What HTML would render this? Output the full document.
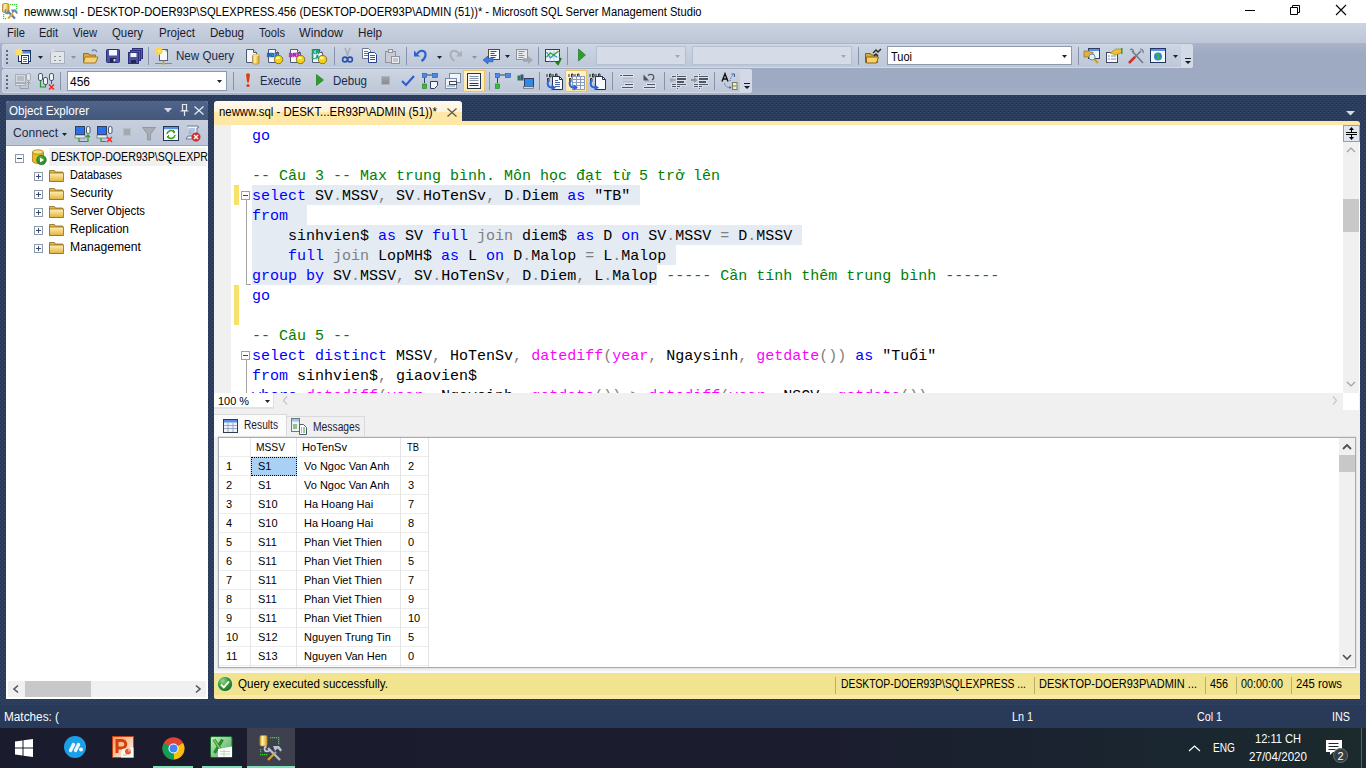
<!DOCTYPE html>
<html><head><meta charset="utf-8"><style>*{margin:0;padding:0;box-sizing:border-box}
html,body{width:1366px;height:768px;overflow:hidden;background:#2a3b59}
body{position:relative;font-family:"Liberation Sans",sans-serif}
.a{position:absolute}
.i{position:absolute;overflow:visible}
.t{position:absolute;white-space:pre;line-height:normal}
.code{position:absolute;font-family:"Liberation Mono",monospace;font-size:15px;white-space:pre;line-height:20px;color:#000}
.k{color:#0000ff}.c{color:#008000}.g{color:#808080}.m{color:#ff00ff}</style></head><body>
<svg class="i" style="left:0;top:0" width="1366" height="768"><defs><pattern id="dp" width="4" height="4" patternUnits="userSpaceOnUse"><rect width="4" height="4" fill="#2b3d5b"/><rect x="0" y="0" width="1" height="1" fill="#37496b"/><rect x="2" y="2" width="1" height="1" fill="#37496b"/><rect x="2" y="1" width="1" height="1" fill="#25344f"/><rect x="0" y="3" width="1" height="1" fill="#25344f"/></pattern></defs><rect width="1366" height="768" fill="url(#dp)"/></svg>
<div class="a" style="left:0px;top:0px;width:1366px;height:23px;background:#fff"></div>
<svg width="0" height="0" style="position:absolute"><defs><linearGradient id="gold" x1="0" y1="0" x2="1" y2="0"><stop offset="0" stop-color="#d9a830"/><stop offset="0.35" stop-color="#fff2b0"/><stop offset="1" stop-color="#e0a010"/></linearGradient></defs></svg>
<svg class="i" style="left:0px;top:0px;" width="24" height="24" viewBox="0 0 24 24"><rect x="2.5" y="3.5" width="6.5" height="9" rx="1.5" fill="url(#gold)" stroke="#b89040" stroke-width="0.9"/><rect x="10" y="4" width="1.2" height="1.2" fill="#33cc33"/><rect x="12" y="4" width="1.2" height="1.2" fill="#33cc33"/><rect x="14" y="4" width="1.2" height="1.2" fill="#33cc33"/><rect x="16" y="4" width="1.2" height="1.2" fill="#33cc33"/><rect x="16" y="6" width="1.2" height="1.2" fill="#33cc33"/><rect x="16" y="8" width="1.2" height="1.2" fill="#33cc33"/><rect x="3" y="14" width="1.2" height="1.2" fill="#33cc33"/><rect x="3" y="16" width="1.2" height="1.2" fill="#33cc33"/><rect x="3" y="18" width="1.2" height="1.2" fill="#33cc33"/><rect x="5" y="18" width="1.2" height="1.2" fill="#33cc33"/><path d="M7.5 11L15 18.5" stroke="#5a78a8" stroke-width="2.2"/><path d="M6.5 9.5a2 2 0 1 0 2.5 2.5" fill="none" stroke="#6a88b8" stroke-width="1.6"/><path d="M11 9.5h5l2 3.5-1.5 1-2-2.5-2 2z" fill="#6a88b8"/><path d="M8 18.5l5-5" stroke="#e8a820" stroke-width="2"/></svg>
<span class="t" style="left:24px;top:5.14px;font-size:12px;color:#000;font-family:'Liberation Sans';transform:scaleX(0.9307);transform-origin:0 0;">newww.sql - DESKTOP-DOER93P\SQLEXPRESS.456 (DESKTOP-DOER93P\ADMIN (51))* - Microsoft SQL Server Management Studio</span>
<div class="a" style="left:1245px;top:10px;width:10px;height:1px;background:#000"></div>
<svg class="i" style="left:1289px;top:4px;" width="12" height="12" viewBox="0 0 12 12"><path d="M1.5 3.5h7v7h-7zM3.5 3.5v-2h7v7h-2" fill="none" stroke="#000" stroke-width="1"/></svg>
<svg class="i" style="left:1335px;top:4px;" width="12" height="12" viewBox="0 0 12 12"><path d="M1 1L11 11M11 1L1 11" stroke="#000" stroke-width="1.1"/></svg>
<div class="a" style="left:0px;top:23px;width:1366px;height:20px;background:linear-gradient(#ccd4e2,#bcc6d7)"></div>
<span class="t" style="left:7px;top:26.14px;font-size:12px;color:#1b1b2e;font-family:'Liberation Sans';transform:scaleX(0.9309);transform-origin:0 0;">File</span>
<span class="t" style="left:39px;top:26.14px;font-size:12px;color:#1b1b2e;font-family:'Liberation Sans';transform:scaleX(0.9189);transform-origin:0 0;">Edit</span>
<span class="t" style="left:73px;top:26.14px;font-size:12px;color:#1b1b2e;font-family:'Liberation Sans';transform:scaleX(0.9305);transform-origin:0 0;">View</span>
<span class="t" style="left:112px;top:26.14px;font-size:12px;color:#1b1b2e;font-family:'Liberation Sans';transform:scaleX(0.9487);transform-origin:0 0;">Query</span>
<span class="t" style="left:159px;top:26.14px;font-size:12px;color:#1b1b2e;font-family:'Liberation Sans';transform:scaleX(0.9639);transform-origin:0 0;">Project</span>
<span class="t" style="left:210px;top:26.14px;font-size:12px;color:#1b1b2e;font-family:'Liberation Sans';transform:scaleX(0.9615);transform-origin:0 0;">Debug</span>
<span class="t" style="left:259px;top:26.14px;font-size:12px;color:#1b1b2e;font-family:'Liberation Sans';transform:scaleX(0.9281);transform-origin:0 0;">Tools</span>
<span class="t" style="left:299px;top:26.14px;font-size:12px;color:#1b1b2e;font-family:'Liberation Sans';transform:scaleX(1.0309);transform-origin:0 0;">Window</span>
<span class="t" style="left:358px;top:26.14px;font-size:12px;color:#1b1b2e;font-family:'Liberation Sans';transform:scaleX(0.9725);transform-origin:0 0;">Help</span>
<div class="a" style="left:0px;top:43px;width:1366px;height:52px;background:linear-gradient(#a9b4c9,#9eaac1 20%,#9eaac1 85%,#a7b2c7)"></div>
<div class="a" style="left:2px;top:44px;width:1191px;height:24px;background:linear-gradient(#cdd5e2,#bdc7d7);border-radius:3px;box-shadow:inset 0 0 0 1px #d3dae6"></div>
<div class="a" style="left:1181px;top:44px;width:12px;height:24px;background:#d3dae6;border-radius:0 3px 3px 0"></div>
<div class="a" style="left:2px;top:69px;width:750px;height:24px;background:linear-gradient(#cdd5e2,#bdc7d7);border-radius:3px;box-shadow:inset 0 0 0 1px #d3dae6"></div>
<div class="a" style="left:740px;top:69px;width:12px;height:24px;background:#d3dae6;border-radius:0 3px 3px 0"></div>
<div class="a" style="left:6px;top:50px;width:2px;height:2px;background:#5a6780"></div><div class="a" style="left:6px;top:54px;width:2px;height:2px;background:#5a6780"></div><div class="a" style="left:6px;top:58px;width:2px;height:2px;background:#5a6780"></div><div class="a" style="left:6px;top:62px;width:2px;height:2px;background:#5a6780"></div>
<div class="a" style="left:6px;top:75px;width:2px;height:2px;background:#5a6780"></div><div class="a" style="left:6px;top:79px;width:2px;height:2px;background:#5a6780"></div><div class="a" style="left:6px;top:83px;width:2px;height:2px;background:#5a6780"></div><div class="a" style="left:6px;top:87px;width:2px;height:2px;background:#5a6780"></div>
<div class="a" style="left:148px;top:47px;width:1px;height:18px;background:#8592ab"></div>
<div class="a" style="left:334px;top:47px;width:1px;height:18px;background:#8592ab"></div>
<div class="a" style="left:406px;top:47px;width:1px;height:18px;background:#8592ab"></div>
<div class="a" style="left:538px;top:47px;width:1px;height:18px;background:#8592ab"></div>
<div class="a" style="left:567px;top:47px;width:1px;height:18px;background:#8592ab"></div>
<div class="a" style="left:858px;top:47px;width:1px;height:18px;background:#8592ab"></div>
<div class="a" style="left:1078px;top:47px;width:1px;height:18px;background:#8592ab"></div>
<div class="a" style="left:60px;top:72px;width:1px;height:18px;background:#8592ab"></div>
<div class="a" style="left:233px;top:72px;width:1px;height:18px;background:#8592ab"></div>
<div class="a" style="left:489px;top:72px;width:1px;height:18px;background:#8592ab"></div>
<div class="a" style="left:539px;top:72px;width:1px;height:18px;background:#8592ab"></div>
<div class="a" style="left:612px;top:72px;width:1px;height:18px;background:#8592ab"></div>
<div class="a" style="left:664px;top:72px;width:1px;height:18px;background:#8592ab"></div>
<div class="a" style="left:714px;top:72px;width:1px;height:18px;background:#8592ab"></div>
<svg class="i" style="left:15px;top:48px;" width="16" height="16" viewBox="0 0 16 16"><rect x="3.5" y="2.5" width="12" height="11" fill="#f4f8ff" stroke="#1f3566"/><rect x="4" y="3" width="11" height="2.5" fill="#4f86e0"/><rect x="6.5" y="7.5" width="7" height="8" fill="#fff" stroke="#1f3566"/><path d="M8 9.5h4M8 11.5h4M8 13.5h4" stroke="#3f6fd0"/><circle cx="4" cy="4" r="3.3" fill="#ffd54a"/><path d="M4 0v8M0 4h8M1 1l6 6M7 1L1 7" stroke="#ffe98a" stroke-width="0.8"/></svg>
<svg class="i" style="left:38px;top:56px;" width="5" height="3" viewBox="0 0 5 3"><path d="M0 0h5L2.5 3z" fill="#1b2233"/></svg>
<svg class="i" style="left:49px;top:48px;" width="16" height="16" viewBox="0 0 16 16"><rect x="1.5" y="3.5" width="14" height="12" fill="#e2e5ea" stroke="#aab0b8"/><path d="M5 8.5h2M10 8.5h2M5 12.5h2M10 12.5h2" stroke="#8f959e" stroke-width="1.2"/><path d="M3.5 0v6M0.5 3h6M1.5 1l4 4M5.5 1l-4 4" stroke="#d8dce2"/></svg>
<svg class="i" style="left:71px;top:56px;" width="5" height="3" viewBox="0 0 5 3"><path d="M0 0h5L2.5 3z" fill="#8a93a3"/></svg>
<svg class="i" style="left:82px;top:48px;" width="17" height="16" viewBox="0 0 17 16"><path d="M1.5 5.5h5l1 1.5h6v7.5h-12z" fill="#d9a93a" stroke="#9a7020"/><path d="M3 9h13l-2.5 6h-12z" fill="#f5d27a" stroke="#a67a20"/><path d="M10 3c2-2 4-1 5 1" fill="none" stroke="#5a7ab0" stroke-width="1.2"/></svg>
<svg class="i" style="left:105px;top:48px;" width="16" height="16" viewBox="0 0 16 16"><rect x="1.5" y="1.5" width="13" height="13" rx="1" fill="#4b4fa6" stroke="#2e2f7a"/><rect x="4" y="2" width="8" height="5.5" fill="#f4f6ff"/><rect x="5" y="10" width="6" height="4.5" fill="#20254a"/><rect x="8.5" y="11" width="2" height="2.5" fill="#dde"/></svg>
<svg class="i" style="left:127px;top:48px;" width="16" height="16" viewBox="0 0 16 16"><rect x="5.5" y="0.5" width="10" height="10" fill="#5a5fb8" stroke="#2e2f7a"/><rect x="3.5" y="2.5" width="10" height="10" fill="#5458b0" stroke="#2e2f7a"/><rect x="1.5" y="4.5" width="10" height="11" fill="#4b4fa6" stroke="#2e2f7a"/><rect x="3.5" y="5" width="6" height="4" fill="#f4f6ff"/><rect x="4" y="12" width="5" height="3" fill="#20254a"/></svg>
<svg class="i" style="left:154px;top:47px;" width="18" height="18" viewBox="0 0 18 18"><rect x="5.5" y="2.5" width="8" height="11" fill="#f8f9fc" stroke="#5a6070"/><path d="M11 2.5l2.5 2.5" stroke="#5a6070"/><circle cx="5" cy="4" r="3.5" fill="#ffc820"/><path d="M5 0v8M1 4h8M2 1l6 6M8 1L2 7" stroke="#ffe680" stroke-width="0.8"/><path d="M9.5 13.5v2.5M1 16.5h17" stroke="#b88a10" stroke-width="1"/><circle cx="9.5" cy="16.5" r="1.2" fill="#d8a010"/></svg>
<span class="t" style="left:176px;top:49.14px;font-size:12px;color:#1b2a4a;font-family:'Liberation Sans';transform:scaleX(0.9664);transform-origin:0 0;">New Query</span>
<svg class="i" style="left:245px;top:48px;" width="17" height="17" viewBox="0 0 17 17"><path d="M1.5 1.5h7l3 3v10h-10z" fill="#f4f7fd" stroke="#4f5a70"/><path d="M8.5 1.5v3h3" fill="#dfe6f2" stroke="#4f5a70"/><rect x="7.5" y="6.5" width="6.5" height="9.5" rx="1.5" fill="url(#gold)" stroke="#b08a30" stroke-width="0.8"/><ellipse cx="10.75" cy="7.3" rx="3.2" ry="1" fill="#f8e090"/></svg>
<svg class="i" style="left:267px;top:48px;" width="17" height="17" viewBox="0 0 17 17"><path d="M1.5 1.5h7l3 3v10h-10z" fill="#f4f7fd" stroke="#4f5a70"/><path d="M8.5 1.5v3h3" fill="#dfe6f2" stroke="#4f5a70"/><text x="0" y="8.6" font-family="Liberation Mono" font-size="6" font-weight="bold" fill="#2060c0" stroke="#2060c0" stroke-width="0.6" letter-spacing="0.2">MDX</text><circle cx="11.5" cy="11.5" r="4.2" fill="#f2d21a" stroke="#7a6010" stroke-width="0.8"/><ellipse cx="10.8" cy="10" rx="2" ry="1.3" fill="#fff6a0"/></svg>
<svg class="i" style="left:289px;top:48px;" width="17" height="17" viewBox="0 0 17 17"><path d="M1.5 1.5h7l3 3v10h-10z" fill="#f4f7fd" stroke="#4f5a70"/><path d="M8.5 1.5v3h3" fill="#dfe6f2" stroke="#4f5a70"/><text x="0" y="8.6" font-family="Liberation Mono" font-size="6" font-weight="bold" fill="#c020c0" stroke="#c020c0" stroke-width="0.6" letter-spacing="0.2">DMX</text><circle cx="11.5" cy="11.5" r="4.2" fill="#f2d21a" stroke="#7a6010" stroke-width="0.8"/><ellipse cx="10.8" cy="10" rx="2" ry="1.3" fill="#fff6a0"/></svg>
<svg class="i" style="left:311px;top:48px;" width="17" height="17" viewBox="0 0 17 17"><path d="M1.5 1.5h7l3 3v10h-10z" fill="#f4f7fd" stroke="#4f5a70"/><path d="M8.5 1.5v3h3" fill="#dfe6f2" stroke="#4f5a70"/><text x="0.5" y="6" font-family="Liberation Mono" font-size="5.8" font-weight="bold" fill="#20a060" stroke="#20a060" stroke-width="0.5" letter-spacing="0.4">XM</text><text x="0.5" y="11" font-family="Liberation Mono" font-size="5.8" font-weight="bold" fill="#20a060" stroke="#20a060" stroke-width="0.5" letter-spacing="0.4">LA</text><circle cx="11.5" cy="11.5" r="4.2" fill="#f2d21a" stroke="#7a6010" stroke-width="0.8"/><ellipse cx="10.8" cy="10" rx="2" ry="1.3" fill="#fff6a0"/></svg>
<svg class="i" style="left:342px;top:48px;" width="11" height="15" viewBox="0 0 11 15"><path d="M3 0l3 8M8 0L5 8" stroke="#a8adb5" stroke-width="1.6"/><circle cx="3" cy="11.5" r="2.4" fill="none" stroke="#2a4fb0" stroke-width="1.6"/><circle cx="8" cy="11.5" r="2.4" fill="none" stroke="#2a4fb0" stroke-width="1.6"/></svg>
<svg class="i" style="left:362px;top:48px;" width="16" height="15" viewBox="0 0 16 15"><path d="M0.5 0.5h6l2 2v8h-8z" fill="#fff" stroke="#6a7896"/><path d="M2 3.5h4M2 5.5h4M2 7.5h4" stroke="#4a7ad0"/><path d="M6.5 4.5h6l2 2v8h-8z" fill="#fff" stroke="#27428a"/><path d="M8 7.5h5M8 9.5h5M8 11.5h5" stroke="#2a5ac8"/></svg>
<svg class="i" style="left:384px;top:48px;" width="17" height="16" viewBox="0 0 17 16"><rect x="1.5" y="3.5" width="10" height="11" fill="#c9ccd2" stroke="#8f949c"/><rect x="4.5" y="1.5" width="4" height="3" fill="#e5e7ea" stroke="#8f949c"/><rect x="7.5" y="8.5" width="8" height="7" fill="#eceef1" stroke="#8f949c"/><path d="M9 11h5M9 13h5" stroke="#9aa0a8"/></svg>
<svg class="i" style="left:414px;top:48px;" width="13" height="14" viewBox="0 0 13 14"><path d="M3 6c3-5 9-4 8.5 1.5 -.4 3-2.5 4.5-4 5.5" fill="none" stroke="#2c62d6" stroke-width="2.2"/><path d="M0 2.5v6h6z" fill="#2c62d6"/></svg>
<svg class="i" style="left:437px;top:56px;" width="5" height="3" viewBox="0 0 5 3"><path d="M0 0h5L2.5 3z" fill="#1b2233"/></svg>
<svg class="i" style="left:449px;top:48px;" width="13" height="14" viewBox="0 0 13 14"><path d="M10 6c-3-5-9-4-8.5 1.5 .4 3 2.5 4.5 4 5.5" fill="none" stroke="#aab0b8" stroke-width="2"/><path d="M13 2.5v6h-6z" fill="#aab0b8"/></svg>
<svg class="i" style="left:472px;top:56px;" width="5" height="3" viewBox="0 0 5 3"><path d="M0 0h5L2.5 3z" fill="#8a93a3"/></svg>
<svg class="i" style="left:483px;top:48px;" width="17" height="16" viewBox="0 0 17 16"><rect x="5.5" y="1.5" width="11" height="10" fill="#fafbff" stroke="#5a4a2a"/><path d="M7.5 3.5h6M7.5 5.5h4M7.5 7.5h6M7.5 9.5h5" stroke="#1a50e0"/><path d="M0 12l5-4v2.2h5v3.6H5V16z" fill="#3a7ce0" stroke="#2050b0" stroke-width="0.6"/></svg>
<svg class="i" style="left:505px;top:55px;" width="5" height="3" viewBox="0 0 5 3"><path d="M0 0h5L2.5 3z" fill="#1b2233"/></svg>
<svg class="i" style="left:516px;top:48px;" width="17" height="16" viewBox="0 0 17 16"><rect x="0.5" y="1.5" width="11" height="10" fill="#e8e9ec" stroke="#8f949c"/><path d="M2.5 3.5h6M2.5 5.5h4M2.5 7.5h6M2.5 9.5h5" stroke="#8a8f98"/><path d="M17 12l-5-4v2.2H7v3.6h5V16z" fill="#a3a8b0"/></svg>
<svg class="i" style="left:545px;top:48px;" width="16" height="16" viewBox="0 0 16 16"><rect x="0.5" y="1.5" width="14" height="12" fill="#f0f4fa" stroke="#304060"/><path d="M1 5h14M1 9h14M5 2v12M9 2v12" stroke="#a8b8d0" stroke-width="0.6"/><path d="M1.5 4l4 6 3-3 3.5 2" fill="none" stroke="#1f9acc" stroke-width="1.1"/><path d="M1.5 9l4-4 3 2 5-4" fill="none" stroke="#30a030" stroke-width="1.1"/><path d="M11 14l2 2 3-6" stroke="#208020" stroke-width="2" fill="none"/></svg>
<svg class="i" style="left:578px;top:48px;" width="8" height="14" viewBox="0 0 8 14"><path d="M0.5 1L7.5 7 0.5 13z" fill="#2aa02a" stroke="#1a701a" stroke-width="0.6"/></svg>
<div class="a" style="left:596px;top:46px;width:90px;height:19px;background:#d5dce8;border:1px solid #b4bfd0;border-radius:1px"></div><svg class="i" style="left:675px;top:55px;" width="5" height="3" viewBox="0 0 5 3"><path d="M0 0h5L2.5 3z" fill="#a0a8b8"/></svg>
<div class="a" style="left:692px;top:46px;width:160px;height:19px;background:#d5dce8;border:1px solid #b4bfd0;border-radius:1px"></div><svg class="i" style="left:841px;top:55px;" width="5" height="3" viewBox="0 0 5 3"><path d="M0 0h5L2.5 3z" fill="#a0a8b8"/></svg>
<svg class="i" style="left:865px;top:48px;" width="16" height="16" viewBox="0 0 16 16"><path d="M0.5 5.5h5l1 1.5h6v7.5h-12z" fill="#d9a93a" stroke="#8a6418"/><path d="M1.5 9h12l-2 6h-10z" fill="#f6d26a" stroke="#8a6418"/><path d="M8 5l3-3 2 2 3-3M9 8l2-2 2 2" stroke="#2a2a2a" stroke-width="1.4" fill="none"/></svg>
<div class="a" style="left:887px;top:46px;width:185px;height:19px;background:#fff;border:1px solid #8d99b0"></div><svg class="i" style="left:1062px;top:55px;" width="5" height="3" viewBox="0 0 5 3"><path d="M0 0h5L2.5 3z" fill="#1b2233"/></svg>
<span class="t" style="left:891px;top:50.14px;font-size:12px;color:#000;font-family:'Liberation Sans';transform:scaleX(0.9171);transform-origin:0 0;">Tuoi</span>
<svg class="i" style="left:1084px;top:47px;" width="17" height="17" viewBox="0 0 17 17"><rect x="4.5" y="1.5" width="11" height="10" fill="#eef2fa" stroke="#304060"/><rect x="5" y="2" width="10" height="2" fill="#5a8ee8"/><path d="M0 4h5l1 1h3v5H0z" fill="#e0b040" stroke="#8a6418" stroke-width="0.6"/><circle cx="8" cy="10" r="3" fill="#dff2ff" stroke="#6a8aa8"/><path d="M10 12l4 4" stroke="#c8a020" stroke-width="2"/></svg>
<svg class="i" style="left:1106px;top:48px;" width="17" height="15" viewBox="0 0 17 15"><rect x="0.5" y="4.5" width="11" height="10" fill="#fafbff" stroke="#404860"/><path d="M2 8h2M5 8h5M2 11h2M5 11h5" stroke="#7a90b8"/><path d="M4 5l6-4h5l1 3-6 3z" fill="#f0c030" stroke="#9a7a18" stroke-width="0.6"/><rect x="15" y="0" width="1.5" height="6" fill="#30a030"/></svg>
<svg class="i" style="left:1128px;top:48px;" width="17" height="15" viewBox="0 0 17 15"><path d="M1 15L13 3M4 3l11 12" stroke="#6f7c8a" stroke-width="1.6"/><path d="M1 15l6-6" stroke="#d03030" stroke-width="2.5"/><path d="M2 2c2-2 4 0 3 2M12 1c2 0 4 2 3 4" fill="none" stroke="#6f7c8a" stroke-width="1.2"/></svg>
<svg class="i" style="left:1150px;top:48px;" width="16" height="16" viewBox="0 0 16 16"><rect x="0.5" y="0.5" width="15" height="14" fill="#f4f7fd" stroke="#22355a"/><rect x="1" y="1" width="14" height="2" fill="#5a8ee8"/><circle cx="8" cy="8.5" r="4" fill="#2a8ad8"/><path d="M6 6c2 0 3 1 2 3s1 2 2 1" stroke="#40b040" stroke-width="2" fill="none"/></svg>
<svg class="i" style="left:1173px;top:55px;" width="5" height="3" viewBox="0 0 5 3"><path d="M0 0h5L2.5 3z" fill="#1b2233"/></svg>
<svg class="i" style="left:1185px;top:58px;" width="6" height="6" viewBox="0 0 6 6"><rect width="6" height="1" fill="#111a2e"/><path d="M0 3h6L3 6z" fill="#111a2e"/></svg>
<svg class="i" style="left:15px;top:73px;" width="17" height="16" viewBox="0 0 17 16"><rect x="0.5" y="1.5" width="10" height="8" fill="#d8dbe0" stroke="#a8adb5"/><rect x="2" y="3" width="7" height="5" fill="#b8bcc4"/><rect x="0.5" y="10.5" width="10" height="2" fill="#dde0e4" stroke="#a8adb5"/><rect x="11.5" y="0.5" width="4" height="7" rx="1.5" fill="#e2e4e8" stroke="#a8adb5"/><path d="M5 13v2.5h8.5V9M11.5 10.5l2-2 2 2" stroke="#9aa0a8" fill="none"/></svg>
<svg class="i" style="left:38px;top:73px;" width="17" height="17" viewBox="0 0 17 17"><rect x="0.5" y="0.5" width="4" height="7" rx="1.5" fill="#eef2f8" stroke="#4a5a70"/><rect x="5.5" y="4.5" width="4" height="7" rx="1.5" fill="#eef2f8" stroke="#4a5a70"/><rect x="11.5" y="0.5" width="4" height="7" rx="1.5" fill="#eef2f8" stroke="#4a5a70"/><path d="M2.5 8v6h5v-2" stroke="#1a9a1a" fill="none" stroke-width="1.2"/><path d="M13.5 8v3" stroke="#e02020"/><path d="M11 11.5l5 5M16 11.5l-5 5" stroke="#ff2020" stroke-width="1.5"/></svg>
<div class="a" style="left:67px;top:71px;width:160px;height:20px;background:#fff;border:1px solid #8d99b0"></div><svg class="i" style="left:217px;top:80px;" width="5" height="3" viewBox="0 0 5 3"><path d="M0 0h5L2.5 3z" fill="#1b2233"/></svg>
<span class="t" style="left:70px;top:75.14px;font-size:12px;color:#000;font-family:'Liberation Sans';transform:scaleX(0.9989);transform-origin:0 0;">456</span>
<svg class="i" style="left:245px;top:73px;" width="6" height="15" viewBox="0 0 6 15"><path d="M1 1.5c0-1.5 4-1.5 4 0L3.8 9.5h-1.6z" fill="#e03a10"/><circle cx="3" cy="12.5" r="1.6" fill="#e03a10"/></svg>
<span class="t" style="left:260px;top:74.14px;font-size:12px;color:#1b2a4a;font-family:'Liberation Sans';transform:scaleX(0.9456);transform-origin:0 0;">Execute</span>
<svg class="i" style="left:316px;top:74px;" width="8" height="12" viewBox="0 0 8 12"><path d="M0.5 0.5L7.5 6 0.5 11.5z" fill="#2aa02a" stroke="#1a701a" stroke-width="0.6"/></svg>
<span class="t" style="left:333px;top:74.14px;font-size:12px;color:#1b2a4a;font-family:'Liberation Sans';transform:scaleX(0.9615);transform-origin:0 0;">Debug</span>
<div class="a" style="left:381px;top:76px;width:9px;height:9px;background:linear-gradient(#a0a4aa,#888c92);border:1px solid #b0b4ba"></div>
<svg class="i" style="left:401px;top:75px;" width="14" height="11" viewBox="0 0 14 11"><path d="M1 6l4 4 8-9" fill="none" stroke="#2d5fcf" stroke-width="2.2"/></svg>
<svg class="i" style="left:422px;top:73px;" width="16" height="16" viewBox="0 0 16 16"><rect x="0.5" y="0.5" width="4" height="4" fill="#4a8ae8" stroke="#2050a0" stroke-width="0.6"/><rect x="10.5" y="0.5" width="5" height="4" fill="#4a8ae8" stroke="#2050a0" stroke-width="0.6"/><path d="M5 2h5M2.5 5v5" stroke="#304060"/><rect x="0.5" y="11" width="4" height="4.5" fill="#30c030" stroke="#208020" stroke-width="0.6"/><path d="M8.5 8.5h7v4l-3 3h-4z" fill="#f4f6fa" stroke="#304060"/></svg>
<svg class="i" style="left:445px;top:73px;" width="16" height="16" viewBox="0 0 16 16"><rect x="4.5" y="0.5" width="11" height="9" fill="#f0f3f8" stroke="#7a8aa8"/><rect x="0.5" y="5.5" width="11" height="10" fill="#f0f3f8" stroke="#7a8aa8"/><rect x="4.5" y="8.5" width="7" height="3" fill="#fff" stroke="#404a60"/><path d="M2 13h8" stroke="#7a8aa8"/></svg>
<div class="a" style="left:463px;top:70px;width:22px;height:22px;background:linear-gradient(#fff3d0,#ffe7a8);border:1px solid #e5c365"></div>
<svg class="i" style="left:467px;top:73px;" width="14" height="16" viewBox="0 0 14 16"><rect x="0.5" y="0.5" width="13" height="15" fill="#f6f8fc" stroke="#26334f"/><path d="M2.5 3.5h9M2.5 5.5h9M2.5 7.5h9" stroke="#8a94a8"/><path d="M2.5 10.5h9M2.5 12.5h9" stroke="#26334f"/></svg>
<svg class="i" style="left:495px;top:73px;" width="16" height="16" viewBox="0 0 16 16"><rect x="0.5" y="0.5" width="4" height="4" fill="#4a8ae8" stroke="#2050a0" stroke-width="0.6"/><rect x="10.5" y="0.5" width="5" height="4" fill="#4a8ae8" stroke="#2050a0" stroke-width="0.6"/><path d="M5 2h5M2.5 5v5" stroke="#304060"/><rect x="0.5" y="11" width="4" height="4.5" fill="#30c030" stroke="#208020" stroke-width="0.6"/></svg>
<svg class="i" style="left:517px;top:73px;" width="17" height="16" viewBox="0 0 17 16"><rect x="0.5" y="2.5" width="3" height="5" fill="#208040"/><rect x="3.5" y="1.5" width="3" height="6" fill="#405080"/><rect x="7.5" y="5.5" width="9" height="8" fill="#2a8ae8" stroke="#304060"/><rect x="6.5" y="13.5" width="10" height="2" fill="#d0d4dc" stroke="#505a70" stroke-width="0.6"/></svg>
<svg class="i" style="left:546px;top:73px;" width="17" height="17" viewBox="0 0 17 17"><path d="M1 1v3M3.5 1h1.5v3h-1.5zM7 1v3M9.5 1h1.5v3h-1.5zM1.5 5.5h1.5v3h-1.5z" fill="none" stroke="#1a1a1a" stroke-width="0.9"/><path d="M6.5 3.5h7l3 3v10h-10z" fill="#f8faff" stroke="#26334f"/><path d="M13.5 3.5v3h3" fill="none" stroke="#26334f"/><path d="M9 7.5h3M9 9.5h5M9 11.5h5M9 13.5h5" stroke="#4a6aa8"/><path d="M2.5 7.5C0.5 11 2 14.5 6 14.5" fill="none" stroke="#2a62d8" stroke-width="2"/><path d="M5.5 11.5L10 14.5 5.5 17.5z" fill="#2a62d8"/></svg>
<div class="a" style="left:565px;top:70px;width:22px;height:22px;background:linear-gradient(#fff3d0,#ffe7a8);border:1px solid #e5c365"></div>
<svg class="i" style="left:568px;top:73px;" width="17" height="17" viewBox="0 0 17 17"><path d="M1 1v3M3.5 1h1.5v3h-1.5zM7 1v3M9.5 1h1.5v3h-1.5zM1.5 5.5h1.5v3h-1.5z" fill="none" stroke="#1a1a1a" stroke-width="0.9"/><rect x="4.5" y="3.5" width="12" height="13" fill="#f4f8ff" stroke="#8a9ab8"/><path d="M5 6.5h11M5 9.5h11M5 12.5h11M8.5 4v12M12.5 4v12" stroke="#8a9ab8" stroke-width="1"/><path d="M2.5 7.5C0.5 11 2 14.5 6 14.5" fill="none" stroke="#2a62d8" stroke-width="2"/><path d="M5.5 11.5L10 14.5 5.5 17.5z" fill="#2a62d8"/></svg>
<svg class="i" style="left:589px;top:73px;" width="17" height="17" viewBox="0 0 17 17"><path d="M1 1v3M3.5 1h1.5v3h-1.5zM7 1v3M9.5 1h1.5v3h-1.5zM1.5 5.5h1.5v3h-1.5z" fill="none" stroke="#1a1a1a" stroke-width="0.9"/><path d="M6.5 3.5h7l3 3v10h-10z" fill="#f8faff" stroke="#26334f"/><path d="M13.5 3.5v3h3" fill="none" stroke="#26334f"/><path d="M2.5 7.5C0.5 11 2 14.5 6 14.5" fill="none" stroke="#2a62d8" stroke-width="2"/><path d="M5.5 11.5L10 14.5 5.5 17.5z" fill="#2a62d8"/></svg>
<div class="a" style="left:620px;top:75px;width:2px;height:1px;background:#4f5562;box-shadow:0 0 0 1px rgba(225,232,242,0.75)"></div>
<div class="a" style="left:623px;top:75px;width:10px;height:1px;background:#4f5562;box-shadow:0 0 0 1px rgba(225,232,242,0.75)"></div>
<div class="a" style="left:623px;top:78px;width:10px;height:1px;background:#b4bac4"></div>
<div class="a" style="left:623px;top:81px;width:10px;height:1px;background:#b4bac4"></div>
<div class="a" style="left:625px;top:84px;width:8px;height:1px;background:#4f5562;box-shadow:0 0 0 1px rgba(225,232,242,0.75)"></div>
<div class="a" style="left:622px;top:87px;width:11px;height:1px;background:#4f5562;box-shadow:0 0 0 1px rgba(225,232,242,0.75)"></div>
<svg class="i" style="left:642px;top:72px;" width="14" height="10" viewBox="0 0 14 10"><path d="M6 3.5Q8 1.5 11 3Q13 6 10 8" fill="none" stroke="#4f5562" stroke-width="1.3"/><path d="M1.5 2.5v6h5.5z" fill="#4f5562"/></svg>
<div class="a" style="left:645px;top:81px;width:10px;height:1px;background:#b4bac4"></div>
<div class="a" style="left:647px;top:84px;width:8px;height:1px;background:#4f5562;box-shadow:0 0 0 1px rgba(225,232,242,0.75)"></div>
<div class="a" style="left:644px;top:87px;width:11px;height:1px;background:#4f5562;box-shadow:0 0 0 1px rgba(225,232,242,0.75)"></div>
<div class="a" style="left:677px;top:74px;width:1px;height:1px;background:#4f5562;box-shadow:0 0 0 1px rgba(225,232,242,0.6)"></div>
<div class="a" style="left:672px;top:76px;width:4px;height:1px;background:#4f5562;box-shadow:0 0 0 1px rgba(225,232,242,0.6)"></div>
<div class="a" style="left:677px;top:76px;width:9px;height:1px;background:#4f5562;box-shadow:0 0 0 1px rgba(225,232,242,0.6)"></div>
<div class="a" style="left:677px;top:78px;width:9px;height:2px;background:#4f5562;box-shadow:0 0 0 1px rgba(225,232,242,0.6)"></div>
<div class="a" style="left:677px;top:81px;width:7px;height:2px;background:#4f5562;box-shadow:0 0 0 1px rgba(225,232,242,0.6)"></div>
<div class="a" style="left:672px;top:84px;width:4px;height:1px;background:#4f5562;box-shadow:0 0 0 1px rgba(225,232,242,0.6)"></div>
<div class="a" style="left:677px;top:84px;width:9px;height:1px;background:#4f5562;box-shadow:0 0 0 1px rgba(225,232,242,0.6)"></div>
<div class="a" style="left:672px;top:86px;width:4px;height:1px;background:#4f5562;box-shadow:0 0 0 1px rgba(225,232,242,0.6)"></div>
<div class="a" style="left:677px;top:86px;width:3px;height:1px;background:#4f5562;box-shadow:0 0 0 1px rgba(225,232,242,0.6)"></div>
<div class="a" style="left:677px;top:88px;width:1px;height:1px;background:#4f5562;box-shadow:0 0 0 1px rgba(225,232,242,0.6)"></div>
<svg class="i" style="left:669px;top:77px;" width="7" height="6" viewBox="0 0 7 6"><path d="M0 3l3.5-3v2h3v2h-3v2z" fill="#a3a9b2"/></svg>
<div class="a" style="left:699px;top:74px;width:1px;height:1px;background:#4f5562;box-shadow:0 0 0 1px rgba(225,232,242,0.6)"></div>
<div class="a" style="left:694px;top:76px;width:4px;height:1px;background:#4f5562;box-shadow:0 0 0 1px rgba(225,232,242,0.6)"></div>
<div class="a" style="left:699px;top:76px;width:9px;height:1px;background:#4f5562;box-shadow:0 0 0 1px rgba(225,232,242,0.6)"></div>
<div class="a" style="left:699px;top:78px;width:9px;height:2px;background:#4f5562;box-shadow:0 0 0 1px rgba(225,232,242,0.6)"></div>
<div class="a" style="left:699px;top:81px;width:7px;height:2px;background:#4f5562;box-shadow:0 0 0 1px rgba(225,232,242,0.6)"></div>
<div class="a" style="left:694px;top:84px;width:4px;height:1px;background:#4f5562;box-shadow:0 0 0 1px rgba(225,232,242,0.6)"></div>
<div class="a" style="left:699px;top:84px;width:9px;height:1px;background:#4f5562;box-shadow:0 0 0 1px rgba(225,232,242,0.6)"></div>
<div class="a" style="left:694px;top:86px;width:4px;height:1px;background:#4f5562;box-shadow:0 0 0 1px rgba(225,232,242,0.6)"></div>
<div class="a" style="left:699px;top:86px;width:3px;height:1px;background:#4f5562;box-shadow:0 0 0 1px rgba(225,232,242,0.6)"></div>
<div class="a" style="left:699px;top:88px;width:1px;height:1px;background:#4f5562;box-shadow:0 0 0 1px rgba(225,232,242,0.6)"></div>
<svg class="i" style="left:691px;top:77px;" width="7" height="6" viewBox="0 0 7 6"><path d="M6.5 3L3 0v2H0v2h3v2z" fill="#8f959e"/></svg>
<svg class="i" style="left:721px;top:73px;" width="17" height="17" viewBox="0 0 17 17"><path d="M1 8.5L4 0.8 7 8.5M2.2 6h3.6" fill="none" stroke="#111" stroke-width="1.4"/><path d="M3.5 10.5Q4.5 14.5 9 14.5" fill="none" stroke="#3a5a90" stroke-width="1" stroke-dasharray="1 1"/><path d="M8.5 13l2 1.5-2 1.5z" fill="#3a5a90"/><path d="M9 8Q9.5 4 12.5 1.5" fill="none" stroke="#3a5a90" stroke-width="1" stroke-dasharray="1 1"/><path d="M10.5 1h3v3" fill="none" stroke="#3a5a90"/><rect x="11.5" y="9.5" width="4.5" height="7" fill="#f4eccc" stroke="#7a7a60"/><path d="M12 13h3.5" stroke="#7a7a60"/></svg>
<svg class="i" style="left:744px;top:83px;" width="6" height="6" viewBox="0 0 6 6"><rect width="6" height="1" fill="#111a2e"/><path d="M0 3h6L3 6z" fill="#111a2e"/></svg>
<div class="a" style="left:6px;top:101px;width:202px;height:598px;background:#fff;border-radius:3px 3px 0 0"></div>
<div class="a" style="left:6px;top:101px;width:202px;height:19px;background:linear-gradient(#51658a,#43577c);border-radius:3px 3px 0 0"></div>
<span class="t" style="left:9px;top:104.14px;font-size:12px;color:#fff;font-family:'Liberation Sans';transform:scaleX(0.9674);transform-origin:0 0;">Object Explorer</span>
<svg class="i" style="left:164px;top:108px;" width="8" height="5" viewBox="0 0 8 5"><path d="M0 0h8L4 4.5z" fill="#d4dae6"/></svg>
<svg class="i" style="left:180px;top:104px;" width="8" height="12" viewBox="0 0 8 12"><path d="M2.5 0.5h4v6h-4zM0.5 7h8M4.5 7v5" fill="none" stroke="#e4e8f0" stroke-width="1.2"/></svg>
<svg class="i" style="left:194px;top:106px;" width="10" height="9" viewBox="0 0 10 9"><path d="M0.5 0.5L9.5 8.5M9.5 0.5L0.5 8.5" stroke="#e4e8f0" stroke-width="1.3"/></svg>
<div class="a" style="left:6px;top:120px;width:202px;height:26px;background:linear-gradient(#c7cfdd,#bcc6d6);border-bottom:1px solid #9aa6bb"></div>
<span class="t" style="left:13px;top:126.14px;font-size:12px;color:#1b2a4a;font-family:'Liberation Sans';transform:scaleX(1.0068);transform-origin:0 0;">Connect</span>
<svg class="i" style="left:62px;top:133px;" width="5" height="3" viewBox="0 0 5 3"><path d="M0 0h5L2.5 3z" fill="#1b2233"/></svg>
<svg class="i" style="left:75px;top:126px;" width="16" height="16" viewBox="0 0 16 16"><rect x="0.5" y="0.5" width="9" height="8" fill="#2a70e8" stroke="#304060"/><rect x="0" y="9" width="10" height="3" fill="#e8ecf4" stroke="#505a70" stroke-width="0.6"/><rect x="11.5" y="0.5" width="3.5" height="7" rx="1.5" fill="#f4f6fa" stroke="#4a5a70"/><path d="M4 12v3.5h9V9M11 11l2-2 2 2" fill="none" stroke="#20a020" stroke-width="1.2"/></svg>
<svg class="i" style="left:97px;top:126px;" width="16" height="16" viewBox="0 0 16 16"><rect x="0.5" y="0.5" width="9" height="8" fill="#2a70e8" stroke="#304060"/><rect x="0" y="9" width="10" height="3" fill="#e8ecf4" stroke="#505a70" stroke-width="0.6"/><rect x="11.5" y="0.5" width="3.5" height="7" rx="1.5" fill="#f4f6fa" stroke="#4a5a70"/><path d="M4 12v3.5h5" fill="none" stroke="#20a020" stroke-width="1.2"/><path d="M10 11l5 5M15 11l-5 5" stroke="#ff2020" stroke-width="1.4"/></svg>
<div class="a" style="left:123px;top:128px;width:8px;height:8px;background:#a4a8b0;border:1px solid #b8bcc4"></div>
<svg class="i" style="left:142px;top:127px;" width="14" height="14" viewBox="0 0 14 14"><path d="M0.5 0.5h13L8.5 7v6h-3V7z" fill="#a8acb4" stroke="#8a8e96" stroke-width="0.8"/></svg>
<svg class="i" style="left:163px;top:126px;" width="16" height="15" viewBox="0 0 16 15"><rect x="0.5" y="0.5" width="15" height="14" fill="#f8faff" stroke="#22355a"/><rect x="1" y="1" width="14" height="2.2" fill="#5a8ee8"/><path d="M4 8a4 4 0 0 1 7-2M12 9a4 4 0 0 1-7 2" fill="none" stroke="#40a010" stroke-width="1.6"/><path d="M10 4l2 2-2 1M6 12l-2-1 2-2" fill="#40a010" stroke="#40a010"/></svg>
<svg class="i" style="left:185px;top:125px;" width="16" height="16" viewBox="0 0 16 16"><path d="M2 1h10l2 1-1 1h-1v8H3l-2 3h9" fill="#eef2f8" stroke="#6a7890"/><path d="M4 4h6M4 6h6M4 8h5" stroke="#7a9ad0"/><circle cx="11" cy="12" r="4.2" fill="#d83030" stroke="#a01818" stroke-width="0.5"/><path d="M9 10l4 4M13 10l-4 4" stroke="#fff" stroke-width="1.4"/></svg>
<div class="a" style="left:49px;top:148px;width:157px;height:18px;background:#f0f0f0"></div>
<svg class="i" style="left:15px;top:154px;" width="10" height="10" viewBox="0 0 10 10"><rect x="0.5" y="0.5" width="8" height="8" fill="#fdfdfd" stroke="#8f9aa8"/><path d="M2 4.5h5" stroke="#3a4a70"/></svg>
<svg class="i" style="left:32px;top:149px;" width="15" height="16" viewBox="0 0 15 16"><path d="M0.5 3v9c0 1.5 2.5 2.5 5.5 2.5s5.5-1 5.5-2.5V3" fill="#e8b82a" stroke="#a88018" stroke-width="0.8"/><ellipse cx="6" cy="3" rx="5.5" ry="2.2" fill="#f6dc7a" stroke="#a88018" stroke-width="0.8"/><circle cx="9.5" cy="11" r="4.8" fill="#2a922a" stroke="#1a6a1a" stroke-width="0.6"/><circle cx="9" cy="9.5" r="3" fill="#5ab84a" opacity="0.5"/><path d="M8 8.5v5l4-2.5z" fill="#fff"/></svg>
<span class="t" style="left:51px;top:150.14px;font-size:12px;color:#000;font-family:'Liberation Sans';transform:scaleX(0.8862);transform-origin:0 0;">DESKTOP-DOER93P\SQLEXPR</span>
<svg class="i" style="left:34px;top:172px;" width="10" height="10" viewBox="0 0 10 10"><rect x="0.5" y="0.5" width="8" height="8" fill="#fdfdfd" stroke="#8f9aa8"/><path d="M2 4.5h5M4.5 2v5" stroke="#3a4a70"/></svg>
<svg class="i" style="left:49px;top:169px;" width="15" height="13" viewBox="0 0 15 13"><path d="M0.5 1.5h5l1 1.5h7v9h-13z" fill="#e3b94c" stroke="#8a6a20" stroke-width="0.8"/><rect x="0.5" y="4" width="14" height="8.5" fill="url(#fg)" stroke="#8a6a20" stroke-width="0.8"/></svg>
<span class="t" style="left:70px;top:168.14px;font-size:12px;color:#000;font-family:'Liberation Sans';transform:scaleX(0.9064);transform-origin:0 0;">Databases</span>
<svg class="i" style="left:34px;top:190px;" width="10" height="10" viewBox="0 0 10 10"><rect x="0.5" y="0.5" width="8" height="8" fill="#fdfdfd" stroke="#8f9aa8"/><path d="M2 4.5h5M4.5 2v5" stroke="#3a4a70"/></svg>
<svg class="i" style="left:49px;top:187px;" width="15" height="13" viewBox="0 0 15 13"><path d="M0.5 1.5h5l1 1.5h7v9h-13z" fill="#e3b94c" stroke="#8a6a20" stroke-width="0.8"/><rect x="0.5" y="4" width="14" height="8.5" fill="url(#fg)" stroke="#8a6a20" stroke-width="0.8"/></svg>
<span class="t" style="left:70px;top:186.14px;font-size:12px;color:#000;font-family:'Liberation Sans';transform:scaleX(0.9920);transform-origin:0 0;">Security</span>
<svg class="i" style="left:34px;top:208px;" width="10" height="10" viewBox="0 0 10 10"><rect x="0.5" y="0.5" width="8" height="8" fill="#fdfdfd" stroke="#8f9aa8"/><path d="M2 4.5h5M4.5 2v5" stroke="#3a4a70"/></svg>
<svg class="i" style="left:49px;top:205px;" width="15" height="13" viewBox="0 0 15 13"><path d="M0.5 1.5h5l1 1.5h7v9h-13z" fill="#e3b94c" stroke="#8a6a20" stroke-width="0.8"/><rect x="0.5" y="4" width="14" height="8.5" fill="url(#fg)" stroke="#8a6a20" stroke-width="0.8"/></svg>
<span class="t" style="left:70px;top:204.14px;font-size:12px;color:#000;font-family:'Liberation Sans';transform:scaleX(0.9451);transform-origin:0 0;">Server Objects</span>
<svg class="i" style="left:34px;top:226px;" width="10" height="10" viewBox="0 0 10 10"><rect x="0.5" y="0.5" width="8" height="8" fill="#fdfdfd" stroke="#8f9aa8"/><path d="M2 4.5h5M4.5 2v5" stroke="#3a4a70"/></svg>
<svg class="i" style="left:49px;top:223px;" width="15" height="13" viewBox="0 0 15 13"><path d="M0.5 1.5h5l1 1.5h7v9h-13z" fill="#e3b94c" stroke="#8a6a20" stroke-width="0.8"/><rect x="0.5" y="4" width="14" height="8.5" fill="url(#fg)" stroke="#8a6a20" stroke-width="0.8"/></svg>
<span class="t" style="left:70px;top:222.14px;font-size:12px;color:#000;font-family:'Liberation Sans';transform:scaleX(0.9938);transform-origin:0 0;">Replication</span>
<svg class="i" style="left:34px;top:244px;" width="10" height="10" viewBox="0 0 10 10"><rect x="0.5" y="0.5" width="8" height="8" fill="#fdfdfd" stroke="#8f9aa8"/><path d="M2 4.5h5M4.5 2v5" stroke="#3a4a70"/></svg>
<svg class="i" style="left:49px;top:241px;" width="15" height="13" viewBox="0 0 15 13"><path d="M0.5 1.5h5l1 1.5h7v9h-13z" fill="#e3b94c" stroke="#8a6a20" stroke-width="0.8"/><rect x="0.5" y="4" width="14" height="8.5" fill="url(#fg)" stroke="#8a6a20" stroke-width="0.8"/></svg>
<span class="t" style="left:70px;top:240.14px;font-size:12px;color:#000;font-family:'Liberation Sans';transform:scaleX(1.0137);transform-origin:0 0;">Management</span>
<svg width="0" height="0" style="position:absolute"><defs><linearGradient id="fg" x1="0" y1="0" x2="0" y2="1"><stop offset="0" stop-color="#fff2b8"/><stop offset="1" stop-color="#e2b23a"/></linearGradient></defs></svg>
<div class="a" style="left:8px;top:681px;width:198px;height:16px;background:#f0f0f0"></div>
<div class="a" style="left:25px;top:681px;width:66px;height:16px;background:#c8c8c8"></div>
<svg class="i" style="left:13px;top:685px;" width="6" height="8" viewBox="0 0 6 8"><path d="M5 0.5L1 4l4 3.5" fill="none" stroke="#555" stroke-width="1.6"/></svg>
<svg class="i" style="left:195px;top:685px;" width="6" height="8" viewBox="0 0 6 8"><path d="M1 0.5L5 4 1 7.5" fill="none" stroke="#555" stroke-width="1.6"/></svg>
<div class="a" style="left:214px;top:121px;width:1146px;height:4px;background:#ffe8a6;border-radius:0 3px 0 0"></div>
<div class="a" style="left:214px;top:101px;width:248px;height:24px;background:linear-gradient(#fffaf0,#fff2d6 45%,#ffe8a6 46%,#ffe8a6);border-radius:3px 3px 0 0"></div>
<span class="t" style="left:219px;top:105.14px;font-size:12px;color:#000;font-family:'Liberation Sans';transform:scaleX(0.9476);transform-origin:0 0;">newww.sql - DESKT...ER93P\ADMIN (51))*</span>
<svg class="i" style="left:447px;top:108px;" width="10" height="9" viewBox="0 0 10 9"><path d="M0.5 0.5L9.5 8.5M9.5 0.5L0.5 8.5" stroke="#5f5a48" stroke-width="1.3"/></svg>
<svg class="i" style="left:1346px;top:111px;" width="9" height="5" viewBox="0 0 9 5"><path d="M0 0h9L4.5 4.5z" fill="#d4dae6"/></svg>
<div class="a" style="left:214px;top:125px;width:1146px;height:268px;background:#fff"></div>
<div class="a" style="left:214px;top:125px;width:17px;height:268px;background:#f0f0f0"></div>
<div class="a" style="left:234px;top:185px;width:5px;height:20px;background:#f7e16b"></div>
<div class="a" style="left:234px;top:285px;width:5px;height:40px;background:#f7e16b"></div>
<div class="a" style="left:1343px;top:125px;width:16px;height:268px;background:#f0f0f0"></div>
<div class="a" style="left:1343px;top:125px;width:17px;height:17px;background:#e3e7ef;border:1px solid #8ea0be"></div>
<svg class="i" style="left:1343px;top:125px;" width="17" height="17" viewBox="0 0 17 17"><path d="M6 5h5L8.5 2z" fill="#000"/><rect x="8" y="5" width="1" height="2" fill="#000"/><rect x="3" y="7" width="11" height="1" fill="#000"/><rect x="3" y="9" width="11" height="1" fill="#000"/><rect x="8" y="10" width="1" height="2" fill="#000"/><path d="M6 12h5L8.5 15z" fill="#000"/></svg>
<svg class="i" style="left:1346px;top:147px;" width="10" height="6" viewBox="0 0 10 6"><path d="M1 5l4-4 4 4" fill="none" stroke="#a0a0a0" stroke-width="1.2"/></svg>
<div class="a" style="left:1343px;top:199px;width:16px;height:33px;background:#c8c8c8"></div>
<svg class="i" style="left:1346px;top:381px;" width="10" height="6" viewBox="0 0 10 6"><path d="M1 1l4 4 4-4" fill="none" stroke="#a0a0a0" stroke-width="1.2"/></svg>
<div class="a" style="left:252px;top:185px;width:388px;height:20px;background:#e5ebf2"></div>
<div class="a" style="left:252px;top:205px;width:55px;height:20px;background:#e5ebf2"></div>
<div class="a" style="left:252px;top:225px;width:550px;height:20px;background:#e5ebf2"></div>
<div class="a" style="left:252px;top:245px;width:424px;height:20px;background:#e5ebf2"></div>
<div class="a" style="left:252px;top:265px;width:405px;height:20px;background:#e5ebf2"></div>
<svg class="i" style="left:241px;top:191px;" width="10" height="10" viewBox="0 0 10 10"><rect x="0.5" y="0.5" width="8" height="8" fill="#fff" stroke="#a0a0a0"/><path d="M2 4.5h5" stroke="#444"/></svg>
<div class="a" style="left:246px;top:200px;width:1px;height:84px;background:#a5a5a5"></div>
<div class="a" style="left:246px;top:284px;width:5px;height:1px;background:#a5a5a5"></div>
<svg class="i" style="left:241px;top:351px;" width="10" height="10" viewBox="0 0 10 10"><rect x="0.5" y="0.5" width="8" height="8" fill="#fff" stroke="#a0a0a0"/><path d="M2 4.5h5" stroke="#444"/></svg>
<div class="a" style="left:246px;top:360px;width:1px;height:33px;background:#a5a5a5"></div>
<div class="a" style="left:214px;top:125px;width:1129px;height:268px;overflow:hidden"><div class="code" style="left:38px;top:2px"><span class="k">go</span>

<span class="c">-- Câu 3 -- Max trung bình. Môn học đạt từ 5 trở lên</span>
<span class="k">select</span> SV<span class="g">.</span>MSSV<span class="g">,</span> SV<span class="g">.</span>HoTenSv<span class="g">,</span> D<span class="g">.</span>Diem <span class="k">as</span> "TB"
<span class="k">from</span>
    sinhvien$ <span class="k">as</span> SV <span class="k">full</span> <span class="g">join</span> diem$ <span class="k">as</span> D <span class="k">on</span> SV<span class="g">.</span>MSSV <span class="g">=</span> D<span class="g">.</span>MSSV
    <span class="k">full</span> <span class="g">join</span> LopMH$ <span class="k">as</span> L <span class="k">on</span> D<span class="g">.</span>Malop <span class="g">=</span> L<span class="g">.</span>Malop
<span class="k">group</span> <span class="k">by</span> SV<span class="g">.</span>MSSV<span class="g">,</span> SV<span class="g">.</span>HoTenSv<span class="g">,</span> D<span class="g">.</span>Diem<span class="g">,</span> L<span class="g">.</span>Malop <span class="c">----- Cần tính thêm trung bình ------</span>
<span class="k">go</span>

<span class="c">-- Câu 5 --</span>
<span class="k">select</span> <span class="k">distinct</span> MSSV<span class="g">,</span> HoTenSv<span class="g">,</span> <span class="m">datediff</span><span class="g">(</span><span class="m">year</span><span class="g">,</span> Ngaysinh<span class="g">,</span> <span class="m">getdate</span><span class="g">())</span> <span class="k">as</span> "Tuổi"
<span class="k">from</span> sinhvien$<span class="g">,</span> giaovien$
<span class="k">where</span> <span class="m">datediff</span><span class="g">(</span><span class="m">year</span><span class="g">,</span> Ngaysinh<span class="g">,</span> <span class="m">getdate</span><span class="g">())</span> <span class="g">&gt;</span> <span class="m">datediff</span><span class="g">(</span><span class="m">year</span><span class="g">,</span> NSGV<span class="g">,</span> <span class="m">getdate</span><span class="g">())</span></div></div>
<div class="a" style="left:214px;top:393px;width:1146px;height:280px;background:#f0f0f0"></div>
<div class="a" style="left:214px;top:393px;width:60px;height:15px;background:#fff;border-right:1px solid #e0e0e0"></div>
<div class="a" style="left:214px;top:407px;width:60px;height:2px;background:#e2e2e2"></div>
<span class="t" style="left:218px;top:395.05px;font-size:11px;color:#000;font-family:'Liberation Sans';transform:scaleX(0.9939);transform-origin:0 0;">100 %</span>
<svg class="i" style="left:265px;top:400px;" width="5" height="3" viewBox="0 0 5 3"><path d="M0 0h5L2.5 3z" fill="#222"/></svg>
<svg class="i" style="left:282px;top:396px;" width="6" height="9" viewBox="0 0 6 9"><path d="M5 0.5L1.5 4.5 5 8.5" fill="none" stroke="#c8c8c8" stroke-width="1.2"/></svg>
<svg class="i" style="left:1332px;top:396px;" width="6" height="9" viewBox="0 0 6 9"><path d="M1 0.5L4.5 4.5 1 8.5" fill="none" stroke="#c8c8c8" stroke-width="1.2"/></svg>
<div class="a" style="left:1343px;top:393px;width:16px;height:17px;background:#fff"></div>
<div class="a" style="left:286px;top:416px;width:79px;height:21px;background:#f0f0f0;border:1px solid #dadada;border-bottom:none"></div>
<div class="a" style="left:214px;top:414px;width:73px;height:23px;background:#fbfbfb;border:1px solid #dadada;border-bottom:none;border-left:none"></div>
<svg class="i" style="left:223px;top:419px;" width="15" height="14" viewBox="0 0 15 14"><rect x="0.5" y="0.5" width="14" height="13" fill="#eef2fa" stroke="#303a50"/><rect x="1" y="1" width="13" height="2.5" fill="#5a8ee8"/><path d="M1 6.5h13M1 9.5h13M5 4v9M10 4v9" stroke="#8a9ab8" stroke-width="0.8"/></svg>
<span class="t" style="left:244px;top:418.14px;font-size:12px;color:#1b1b2e;font-family:'Liberation Sans';transform:scaleX(0.8497);transform-origin:0 0;">Results</span>
<svg class="i" style="left:291px;top:418px;" width="16" height="17" viewBox="0 0 16 17"><rect x="0.5" y="0.5" width="8" height="13" fill="#f0f2f6" stroke="#6a7890"/><rect x="1" y="1" width="7" height="2.5" fill="#a8c0e0"/><path d="M8.5 6.5h4l3 3v7h-7z" fill="#fff" stroke="#505a70"/><path d="M10 10h1M10 12h1M10 14h1" stroke="#e04020" stroke-width="1.2"/><path d="M12 10h2M12 12h2M12 14h2" stroke="#30a030"/><rect x="2" y="6" width="4" height="5" fill="#90c090"/></svg>
<span class="t" style="left:313px;top:420.14px;font-size:12px;color:#1b1b2e;font-family:'Liberation Sans';transform:scaleX(0.8594);transform-origin:0 0;">Messages</span>
<div class="a" style="left:217px;top:436px;width:1140px;height:233px;background:#fff;border:1px solid #e3e3e3"></div>
<div class="a" style="left:218px;top:437px;width:1138px;height:231px;border:1px solid #a9aab8;background:#fff"></div>
<div class="a" style="left:219px;top:456px;width:210px;height:1px;background:#ececec"></div>
<div class="a" style="left:219px;top:475px;width:210px;height:1px;background:#ececec"></div>
<div class="a" style="left:219px;top:494px;width:210px;height:1px;background:#ececec"></div>
<div class="a" style="left:219px;top:513px;width:210px;height:1px;background:#ececec"></div>
<div class="a" style="left:219px;top:532px;width:210px;height:1px;background:#ececec"></div>
<div class="a" style="left:219px;top:551px;width:210px;height:1px;background:#ececec"></div>
<div class="a" style="left:219px;top:570px;width:210px;height:1px;background:#ececec"></div>
<div class="a" style="left:219px;top:589px;width:210px;height:1px;background:#ececec"></div>
<div class="a" style="left:219px;top:608px;width:210px;height:1px;background:#ececec"></div>
<div class="a" style="left:219px;top:627px;width:210px;height:1px;background:#ececec"></div>
<div class="a" style="left:219px;top:646px;width:210px;height:1px;background:#ececec"></div>
<div class="a" style="left:219px;top:665px;width:210px;height:1px;background:#ececec"></div>
<div class="a" style="left:250px;top:438px;width:1px;height:229px;background:#e4e4e4"></div>
<div class="a" style="left:296px;top:438px;width:1px;height:229px;background:#e4e4e4"></div>
<div class="a" style="left:400px;top:438px;width:1px;height:229px;background:#e4e4e4"></div>
<div class="a" style="left:428px;top:438px;width:1px;height:229px;background:#e4e4e4"></div>
<div class="a" style="left:251px;top:457px;width:46px;height:19px;background:#a9d0f5;outline:1px dotted #000;outline-offset:-1px"></div>
<span class="t" style="left:256px;top:441.05px;font-size:11px;color:#000;font-family:'Liberation Sans';transform:scaleX(0.9303);transform-origin:0 0;">MSSV</span>
<span class="t" style="left:302px;top:441.05px;font-size:11px;color:#000;font-family:'Liberation Sans';transform:scaleX(1.0082);transform-origin:0 0;">HoTenSv</span>
<span class="t" style="left:407px;top:441.05px;font-size:11px;color:#000;font-family:'Liberation Sans';transform:scaleX(0.8537);transform-origin:0 0;">TB</span>
<span class="t" style="left:226px;top:460.05px;font-size:11px;color:#000;font-family:'Liberation Sans';">1</span>
<span class="t" style="left:258px;top:460.05px;font-size:11px;color:#000;font-family:'Liberation Sans';">S1</span>
<span class="t" style="left:304px;top:460.05px;font-size:11px;color:#000;font-family:'Liberation Sans';">Vo Ngoc Van Anh</span>
<span class="t" style="left:408px;top:460.05px;font-size:11px;color:#000;font-family:'Liberation Sans';">2</span>
<span class="t" style="left:226px;top:479.05px;font-size:11px;color:#000;font-family:'Liberation Sans';">2</span>
<span class="t" style="left:258px;top:479.05px;font-size:11px;color:#000;font-family:'Liberation Sans';">S1</span>
<span class="t" style="left:304px;top:479.05px;font-size:11px;color:#000;font-family:'Liberation Sans';">Vo Ngoc Van Anh</span>
<span class="t" style="left:408px;top:479.05px;font-size:11px;color:#000;font-family:'Liberation Sans';">3</span>
<span class="t" style="left:226px;top:498.05px;font-size:11px;color:#000;font-family:'Liberation Sans';">3</span>
<span class="t" style="left:258px;top:498.05px;font-size:11px;color:#000;font-family:'Liberation Sans';">S10</span>
<span class="t" style="left:304px;top:498.05px;font-size:11px;color:#000;font-family:'Liberation Sans';">Ha Hoang Hai</span>
<span class="t" style="left:408px;top:498.05px;font-size:11px;color:#000;font-family:'Liberation Sans';">7</span>
<span class="t" style="left:226px;top:517.04px;font-size:11px;color:#000;font-family:'Liberation Sans';">4</span>
<span class="t" style="left:258px;top:517.04px;font-size:11px;color:#000;font-family:'Liberation Sans';">S10</span>
<span class="t" style="left:304px;top:517.04px;font-size:11px;color:#000;font-family:'Liberation Sans';">Ha Hoang Hai</span>
<span class="t" style="left:408px;top:517.04px;font-size:11px;color:#000;font-family:'Liberation Sans';">8</span>
<span class="t" style="left:226px;top:536.04px;font-size:11px;color:#000;font-family:'Liberation Sans';">5</span>
<span class="t" style="left:258px;top:536.04px;font-size:11px;color:#000;font-family:'Liberation Sans';">S11</span>
<span class="t" style="left:304px;top:536.04px;font-size:11px;color:#000;font-family:'Liberation Sans';">Phan Viet Thien</span>
<span class="t" style="left:408px;top:536.04px;font-size:11px;color:#000;font-family:'Liberation Sans';">0</span>
<span class="t" style="left:226px;top:555.04px;font-size:11px;color:#000;font-family:'Liberation Sans';">6</span>
<span class="t" style="left:258px;top:555.04px;font-size:11px;color:#000;font-family:'Liberation Sans';">S11</span>
<span class="t" style="left:304px;top:555.04px;font-size:11px;color:#000;font-family:'Liberation Sans';">Phan Viet Thien</span>
<span class="t" style="left:408px;top:555.04px;font-size:11px;color:#000;font-family:'Liberation Sans';">5</span>
<span class="t" style="left:226px;top:574.04px;font-size:11px;color:#000;font-family:'Liberation Sans';">7</span>
<span class="t" style="left:258px;top:574.04px;font-size:11px;color:#000;font-family:'Liberation Sans';">S11</span>
<span class="t" style="left:304px;top:574.04px;font-size:11px;color:#000;font-family:'Liberation Sans';">Phan Viet Thien</span>
<span class="t" style="left:408px;top:574.04px;font-size:11px;color:#000;font-family:'Liberation Sans';">7</span>
<span class="t" style="left:226px;top:593.04px;font-size:11px;color:#000;font-family:'Liberation Sans';">8</span>
<span class="t" style="left:258px;top:593.04px;font-size:11px;color:#000;font-family:'Liberation Sans';">S11</span>
<span class="t" style="left:304px;top:593.04px;font-size:11px;color:#000;font-family:'Liberation Sans';">Phan Viet Thien</span>
<span class="t" style="left:408px;top:593.04px;font-size:11px;color:#000;font-family:'Liberation Sans';">9</span>
<span class="t" style="left:226px;top:612.04px;font-size:11px;color:#000;font-family:'Liberation Sans';">9</span>
<span class="t" style="left:258px;top:612.04px;font-size:11px;color:#000;font-family:'Liberation Sans';">S11</span>
<span class="t" style="left:304px;top:612.04px;font-size:11px;color:#000;font-family:'Liberation Sans';">Phan Viet Thien</span>
<span class="t" style="left:408px;top:612.04px;font-size:11px;color:#000;font-family:'Liberation Sans';">10</span>
<span class="t" style="left:226px;top:631.04px;font-size:11px;color:#000;font-family:'Liberation Sans';">10</span>
<span class="t" style="left:258px;top:631.04px;font-size:11px;color:#000;font-family:'Liberation Sans';">S12</span>
<span class="t" style="left:304px;top:631.04px;font-size:11px;color:#000;font-family:'Liberation Sans';">Nguyen Trung Tin</span>
<span class="t" style="left:408px;top:631.04px;font-size:11px;color:#000;font-family:'Liberation Sans';">5</span>
<span class="t" style="left:226px;top:650.04px;font-size:11px;color:#000;font-family:'Liberation Sans';">11</span>
<span class="t" style="left:258px;top:650.04px;font-size:11px;color:#000;font-family:'Liberation Sans';">S13</span>
<span class="t" style="left:304px;top:650.04px;font-size:11px;color:#000;font-family:'Liberation Sans';">Nguyen Van Hen</span>
<span class="t" style="left:408px;top:650.04px;font-size:11px;color:#000;font-family:'Liberation Sans';">0</span>
<div class="a" style="left:1339px;top:438px;width:16px;height:228px;background:#f0f0f0"></div>
<svg class="i" style="left:1342px;top:443px;" width="10" height="7" viewBox="0 0 10 7"><path d="M1 6l4-4 4 4" fill="none" stroke="#505050" stroke-width="1.8"/></svg>
<div class="a" style="left:1339px;top:455px;width:16px;height:17px;background:#c8c8c8"></div>
<svg class="i" style="left:1342px;top:654px;" width="10" height="7" viewBox="0 0 10 7"><path d="M1 1l4 4 4-4" fill="none" stroke="#505050" stroke-width="1.6"/></svg>
<div class="a" style="left:214px;top:671px;width:1146px;height:2px;background:#fafafa"></div>
<div class="a" style="left:214px;top:673px;width:1146px;height:26px;background:linear-gradient(#f2e48f 0,#f2e48f 85%,#fbe9a8 85%);border-radius:0 0 0 2px"></div>
<svg width="0" height="0" style="position:absolute"><defs><radialGradient id="okg" cx="0.35" cy="0.3" r="0.75"><stop offset="0" stop-color="#9ad88a"/><stop offset="0.5" stop-color="#3a9a3a"/><stop offset="1" stop-color="#1e6e24"/></radialGradient></defs></svg>
<svg class="i" style="left:217px;top:676px;" width="16" height="16" viewBox="0 0 16 16"><circle cx="8" cy="8" r="7.6" fill="url(#okg)" stroke="#f4f8f0" stroke-width="0.7"/><path d="M4 8.5l2.8 2.8 5.2-6" fill="none" stroke="#fff" stroke-width="1.9"/></svg>
<span class="t" style="left:238px;top:677.14px;font-size:12px;color:#000;font-family:'Liberation Sans';transform:scaleX(0.9666);transform-origin:0 0;">Query executed successfully.</span>
<div class="a" style="left:835px;top:677px;width:1px;height:17px;background:#b8ac70"></div>
<div class="a" style="left:1034px;top:677px;width:1px;height:17px;background:#b8ac70"></div>
<div class="a" style="left:1205px;top:677px;width:1px;height:17px;background:#b8ac70"></div>
<div class="a" style="left:1236px;top:677px;width:1px;height:17px;background:#b8ac70"></div>
<div class="a" style="left:1291px;top:677px;width:1px;height:17px;background:#b8ac70"></div>
<span class="t" style="left:841px;top:677.14px;font-size:12px;color:#000;font-family:'Liberation Sans';transform:scaleX(0.8624);transform-origin:0 0;">DESKTOP-DOER93P\SQLEXPRESS ...</span>
<span class="t" style="left:1039px;top:677.14px;font-size:12px;color:#000;font-family:'Liberation Sans';transform:scaleX(0.9160);transform-origin:0 0;">DESKTOP-DOER93P\ADMIN ...</span>
<span class="t" style="left:1210px;top:677.14px;font-size:12px;color:#000;font-family:'Liberation Sans';transform:scaleX(0.8990);transform-origin:0 0;">456</span>
<span class="t" style="left:1241px;top:677.14px;font-size:12px;color:#000;font-family:'Liberation Sans';transform:scaleX(0.8991);transform-origin:0 0;">00:00:00</span>
<span class="t" style="left:1296px;top:677.14px;font-size:12px;color:#000;font-family:'Liberation Sans';transform:scaleX(0.9447);transform-origin:0 0;">245 rows</span>
<div class="a" style="left:0px;top:705px;width:1366px;height:23px;background:#293a58"></div>
<span class="t" style="left:4px;top:710.14px;font-size:12px;color:#fff;font-family:'Liberation Sans';transform:scaleX(0.9819);transform-origin:0 0;">Matches: (</span>
<span class="t" style="left:1012px;top:710.14px;font-size:12px;color:#fff;font-family:'Liberation Sans';transform:scaleX(0.8991);transform-origin:0 0;">Ln 1</span>
<span class="t" style="left:1197px;top:710.14px;font-size:12px;color:#fff;font-family:'Liberation Sans';transform:scaleX(0.8924);transform-origin:0 0;">Col 1</span>
<span class="t" style="left:1332px;top:710.14px;font-size:12px;color:#fff;font-family:'Liberation Sans';transform:scaleX(0.8998);transform-origin:0 0;">INS</span>
<div class="a" style="left:0px;top:728px;width:1366px;height:40px;background:linear-gradient(90deg,#1a1b2c,#1b1d2e 60%,#1a2630 85%,#1b2a2c)"></div>
<svg class="i" style="left:15px;top:739px;" width="18" height="18" viewBox="0 0 18 18"><path d="M0 2.5L7.5 1.5v7H0zM8.5 1.3L18 0v8.5H8.5zM0 9.5h7.5v7L0 15.5zM8.5 9.5H18V18L8.5 16.7z" fill="#fff"/></svg>
<svg class="i" style="left:64px;top:736px;" width="22" height="22" viewBox="0 0 22 22"><circle cx="11" cy="11" r="11" fill="#1aa0e8"/><path d="M6.5 14.5l3-6M11.5 14.5l3-6" stroke="#eef4fa" stroke-width="3.4" stroke-linecap="round"/><circle cx="17" cy="13.5" r="2" fill="#eef4fa"/></svg>
<svg width="0" height="0" style="position:absolute"><defs><linearGradient id="ppg" x1="0" y1="0" x2="1" y2="1"><stop offset="0" stop-color="#f39a60"/><stop offset="0.6" stop-color="#fbd2b8"/><stop offset="1" stop-color="#fff"/></linearGradient></defs></svg>
<svg class="i" style="left:112px;top:736px;" width="22" height="22" viewBox="0 0 22 22"><rect x="0.5" y="0.5" width="21" height="21" fill="url(#ppg)" stroke="#c84010"/><path d="M5 17V4.5h5a3.8 3.8 0 0 1 0 7.6H6.5" fill="none" stroke="#d4400c" stroke-width="3"/><path d="M10 13l11.5-1.5V21.5H9z" fill="#fff"/><circle cx="16" cy="15.5" r="3" fill="#e8582a"/><path d="M16 15.5V12.5a3 3 0 0 1 3 3z" fill="#f8a080"/><path d="M11 19h4" stroke="#e8a080"/></svg>
<svg class="i" style="left:162px;top:737px;" width="23" height="23" viewBox="0 0 23 23"><circle cx="11.5" cy="11.5" r="11" fill="#db4437"/><path d="M11.5 11.5L2 6A11 11 0 0 1 11.5 0.5 11 11 0 0 1 21 6z" fill="#db4437"/><path d="M11.5 11.5L21 6A11 11 0 0 1 12 22.5z" fill="#f4c20d"/><path d="M11.5 11.5L12 22.5A11 11 0 0 1 2 6z" fill="#0f9d58"/><circle cx="11.5" cy="11.5" r="5" fill="#fff"/><circle cx="11.5" cy="11.5" r="4" fill="#4285f4"/></svg>
<svg width="0" height="0" style="position:absolute"><defs><linearGradient id="xlg" x1="0" y1="0" x2="1" y2="1"><stop offset="0" stop-color="#c8ecc8"/><stop offset="1" stop-color="#4aa85a"/></linearGradient></defs></svg>
<svg class="i" style="left:210px;top:736px;" width="23" height="22" viewBox="0 0 23 22"><rect x="0.5" y="0.5" width="21.5" height="21" rx="1.5" fill="url(#xlg)" stroke="#1a6a2a"/><path d="M4 3.5l9 14M12.5 3.5L4.5 17" stroke="#2a8a2a" stroke-width="3.2"/><path d="M4 3.5l9 14" stroke="#7acc5a" stroke-width="1.4"/><path d="M8 13l14-2.5V21H8z" fill="#fff"/><path d="M10 15.5h10M10 18h10M14 13v8" stroke="#a8d8b0" stroke-width="0.8"/></svg>
<div class="a" style="left:247px;top:728px;width:48px;height:40px;background:rgba(255,255,255,0.16)"></div>
<svg class="i" style="left:258px;top:734px;" width="26" height="28" viewBox="0 0 26 28"><rect x="2" y="1.5" width="7" height="10.5" rx="1.5" fill="url(#gold)" stroke="#b89040" stroke-width="0.8"/><rect x="12" y="3" width="1.3" height="1.3" fill="#3ccc3c"/><rect x="14" y="3" width="1.3" height="1.3" fill="#3ccc3c"/><rect x="16" y="3" width="1.3" height="1.3" fill="#3ccc3c"/><rect x="18" y="3" width="1.3" height="1.3" fill="#3ccc3c"/><rect x="20" y="3" width="1.3" height="1.3" fill="#3ccc3c"/><rect x="20" y="5" width="1.3" height="1.3" fill="#3ccc3c"/><rect x="20" y="7" width="1.3" height="1.3" fill="#3ccc3c"/><rect x="20" y="9" width="1.3" height="1.3" fill="#3ccc3c"/><rect x="2" y="15" width="1.3" height="1.3" fill="#3ccc3c"/><rect x="2" y="17" width="1.3" height="1.3" fill="#3ccc3c"/><rect x="2" y="20" width="1.3" height="1.3" fill="#3ccc3c"/><rect x="4" y="20" width="1.3" height="1.3" fill="#3ccc3c"/><rect x="6" y="20" width="1.3" height="1.3" fill="#3ccc3c"/><rect x="8" y="20" width="1.3" height="1.3" fill="#3ccc3c"/><path d="M10 14L22 26" stroke="#b0bccb" stroke-width="2.4"/><path d="M8.5 12.5a2.5 2.5 0 1 0 3 3" fill="none" stroke="#c0cad8" stroke-width="1.8"/><path d="M15 12h6l3 4-1.5 1.5-3-3-2.5 2.5z" fill="#b8c4d4"/><path d="M10 26l6-6" stroke="#e0a820" stroke-width="2.2"/><path d="M16 20l2-2" stroke="#9aa8b8" stroke-width="2"/></svg>
<div class="a" style="left:153px;top:766px;width:40px;height:2px;background:#7ee0b8"></div>
<div class="a" style="left:202px;top:766px;width:40px;height:2px;background:#7ee0b8"></div>
<div class="a" style="left:247px;top:766px;width:48px;height:2px;background:#7ee0b8"></div>
<svg class="i" style="left:1188px;top:745px;" width="13" height="7" viewBox="0 0 13 7"><path d="M1 6l5.5-5 5.5 5" fill="none" stroke="#fff" stroke-width="1.2"/></svg>
<span class="t" style="left:1213px;top:741.14px;font-size:12px;color:#fff;font-family:'Liberation Sans';transform:scaleX(0.8460);transform-origin:0 0;">ENG</span>
<span class="t" style="left:1255px;top:732.14px;font-size:12px;color:#fff;font-family:'Liberation Sans';transform:scaleX(0.9236);transform-origin:0 0;">12:11 CH</span>
<span class="t" style="left:1249px;top:750.14px;font-size:12px;color:#fff;font-family:'Liberation Sans';transform:scaleX(0.9657);transform-origin:0 0;">27/04/2020</span>
<svg class="i" style="left:1325px;top:739px;" width="24" height="25" viewBox="0 0 24 25"><path d="M1 1h16v12H8l-3 3v-3H1z" fill="#fff"/><path d="M3.5 4.5h10M3.5 7.5h10M3.5 10.5h7" stroke="#1b2a2c" stroke-width="1.2"/><circle cx="15.5" cy="16.5" r="7" fill="#3a3d40" stroke="#6a6d70"/><text x="15.5" y="20.5" font-family="Liberation Sans" font-size="11" fill="#fff" text-anchor="middle">2</text></svg>
<div class="a" style="left:1361px;top:728px;width:1px;height:40px;background:#5a6068"></div>
</body></html>
